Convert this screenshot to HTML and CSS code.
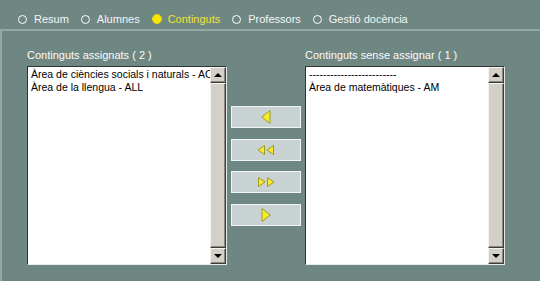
FILE: index.html
```html
<!DOCTYPE html>
<html lang="ca">
<head>
    <meta charset="UTF-8">
    <title>Continguts</title>
    <link rel="stylesheet" href="styles.css">
</head>
<body>
    <div class="tabs">
        <span class="tab"><span class="dot"></span>Resum</span>
        <span class="tab"><span class="dot"></span>Alumnes</span>
        <span class="tab active"><span class="dot"></span>Continguts</span>
        <span class="tab"><span class="dot"></span>Professors</span>
        <span class="tab"><span class="dot"></span>Gestió docència</span>
    </div>
    <div class="panel">
        <div class="col">
            <div class="label">Continguts assignats ( 2 )</div>
            <div class="listbox">
                <div class="items">
                    <div class="item">Àrea de ciències socials i naturals - ACSN</div>
                    <div class="item">Àrea de la llengua - ALL</div>
                </div>
                <div class="scroll">
                    <div class="sbtn"><span class="up"></span></div>
                    <div class="thumb"></div>
                    <div class="sbtn"><span class="down"></span></div>
                </div>
            </div>
        </div>
        <div class="moves">
            <button class="move">
                <svg width="10" height="14" viewBox="0 0 10 14"><polygon points="9,0.5 0.8,7 9,13.5" class="arrow"/></svg>
            </button>
            <button class="move">
                <svg width="18" height="10" viewBox="0 0 18 10"><polygon points="7.5,0.5 1,5 7.5,9.5" class="arrow"/><polygon points="16.5,0.5 10,5 16.5,9.5" class="arrow"/></svg>
            </button>
            <button class="move">
                <svg width="18" height="10" viewBox="0 0 18 10"><polygon points="1.5,0.5 8,5 1.5,9.5" class="arrow"/><polygon points="10.5,0.5 17,5 10.5,9.5" class="arrow"/></svg>
            </button>
            <button class="move">
                <svg width="10" height="14" viewBox="0 0 10 14"><polygon points="1,0.5 9.2,7 1,13.5" class="arrow"/></svg>
            </button>
        </div>
        <div class="col">
            <div class="label">Continguts sense assignar ( 1 )</div>
            <div class="listbox">
                <div class="items">
                    <div class="item">-------------------------</div>
                    <div class="item">Àrea de matemàtiques - AM</div>
                </div>
                <div class="scroll">
                    <div class="sbtn"><span class="up"></span></div>
                    <div class="thumb"></div>
                    <div class="sbtn"><span class="down"></span></div>
                </div>
            </div>
        </div>
    </div>
</body>
</html>
```

FILE: styles.css
```css
html {
    background: #6f8782;
}
body {
    margin: 0;
    background: #6f8782;
    font-family: "Liberation Sans", Arial, sans-serif;
    font-size: 11px;
    color: #fff;
}
.tabs {
    box-sizing: border-box;
    height: 29px;
    padding: 9px 0 0 18px;
    display: flex;
    line-height: 13px;
}
.tab {
    display: flex;
    align-items: center;
    margin-right: 12px;
    color: #f4f6f6;
}
.dot {
    box-sizing: border-box;
    width: 9px;
    height: 9px;
    border: 1px solid #fff;
    border-radius: 50%;
    margin-right: 7px;
}
.tab.active {
    color: #f2e23a;
}
.tab.active .dot {
    background: #f7e600;
    border-color: #e8d800;
    width: 10px;
    height: 10px;
    margin-right: 6px;
}
.panel {
    border-top: 2px solid #95a7a3;
    border-left: 2px solid #95a7a3;
    padding: 18px 0 0 25px;
    display: flex;
    gap: 4px;
    height: 252px;
    box-sizing: border-box;
}
.col {
    width: 200px;
}
.label {
    line-height: 13px;
    margin-bottom: 4px;
    color: #fbfbfb;
}
.listbox {
    box-sizing: border-box;
    width: 200px;
    height: 199px;
    background: #fff;
    border: 1px solid;
    border-color: #2f3331 #e4ebe9 #e4ebe9 #2f3331;
    display: flex;
}
.items {
    flex: 1;
    overflow: hidden;
    padding: 1px 0 0 3px;
    color: #000;
    font-size: 10.5px;
    line-height: 13px;
}
.item {
    white-space: nowrap;
}
.scroll {
    width: 16px;
    display: flex;
    flex-direction: column;
}
.sbtn, .thumb {
    box-sizing: border-box;
    background: #d4d0c8;
    border: 1px solid;
    border-color: #f4f4f0 #3c3c3c #3c3c3c #f4f4f0;
    box-shadow: inset -1px -1px #8a8780;
}
.sbtn {
    height: 16px;
    display: flex;
    align-items: center;
    justify-content: center;
}
.thumb {
    flex: 1;
}
.up, .down {
    width: 0;
    height: 0;
    border-left: 4px solid transparent;
    border-right: 4px solid transparent;
}
.up {
    border-bottom: 4px solid #000;
}
.down {
    border-top: 4px solid #000;
}
.moves {
    width: 70px;
    padding-top: 57px;
    display: flex;
    flex-direction: column;
    gap: 10.5px;
}
.move {
    width: 70px;
    height: 22px;
    padding: 0;
    margin: 0;
    background: #c9d2d2;
    border: 1px solid #f0f4f4;
    display: flex;
    align-items: center;
    justify-content: center;
    cursor: pointer;
}
.arrow {
    fill: #f6ea2a;
    stroke: #9c9a28;
    stroke-width: 1;
}
```
